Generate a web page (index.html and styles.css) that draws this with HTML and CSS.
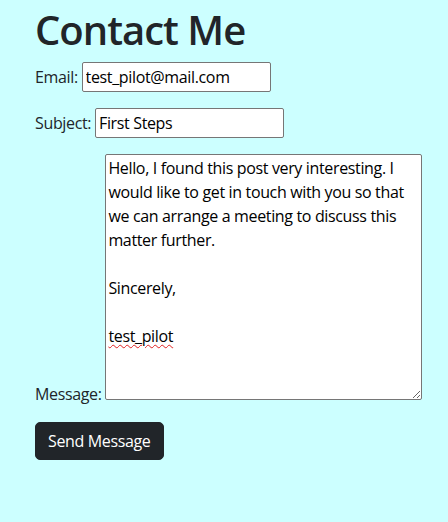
FILE: index.html
```html
<!DOCTYPE html>
<html lang="en">
<head>
<meta charset="utf-8">
<title>Contact Me</title>
<link rel="stylesheet" href="styles.css">
</head>
<body>
<div class="container">
  <h1 class="title">Contact Me</h1>
  <form class="contact-form">
    <div class="field">
      <label for="email">Email:</label>
      <input id="email" class="text-input email" type="text" value="test_pilot@mail.com">
    </div>
    <div class="field">
      <label for="subject">Subject:</label>
      <input id="subject" class="text-input subject" type="text" value="First Steps">
    </div>
    <div class="field">
      <label>Message:</label>
      <div class="message" contenteditable="true" spellcheck="false">Hello, I found this post very interesting. I would like to get in touch with you so that we can arrange a meeting to discuss this matter further.<br><br>Sincerely,<br><br><span class="misspelled">test_pilot</span></div>
    </div>
    <button type="button" class="btn">Send Message</button>
  </form>
</div>
</body>
</html>
```

FILE: styles.css
```css
html, body {
  margin: 0;
  padding: 0;
}
body {
  background: #ccffff;
  color: #212529;
  font-family: "Open Sans", "Noto Sans", sans-serif;
  font-size: 16px;
  line-height: 24px;
  letter-spacing: -0.35px;
}
.container {
  padding: 6px 0 0 35px;
}
.title {
  margin: 0 0 8px;
  font-size: 40px;
  line-height: 48px;
  font-weight: 600;
  letter-spacing: -1px;
}
.field {
  margin-bottom: 16px;
  white-space: nowrap;
}
.text-input {
  font-family: inherit;
  font-size: 16px;
  letter-spacing: -0.35px;
  color: #000;
  border: 1px solid #767676;
  border-radius: 2px;
  padding: 2px 3px;
  height: 30px;
  box-sizing: border-box;
  background: #fff;
}
.email { width: 189px; }
.subject { width: 189px; }
.message {
  display: inline-block;
  white-space: normal;
  vertical-align: baseline;
  width: 317px;
  height: 246px;
  box-sizing: border-box;
  border: 1px solid #767676;
  border-radius: 2px;
  background: #fff;
  color: #000;
  padding: 1px 2px;
  overflow: auto;
  resize: both;
  outline: none;
}
.misspelled {
  text-decoration: underline wavy #e02020;
  text-decoration-thickness: 1px;
  text-underline-offset: 2px;
}
.btn {
  font-family: inherit;
  font-size: 16px;
  line-height: 24px;
  letter-spacing: -0.35px;
  color: #fff;
  background: #212529;
  border: 1px solid #212529;
  border-radius: 5px;
  padding: 6px 12px;
}
```
